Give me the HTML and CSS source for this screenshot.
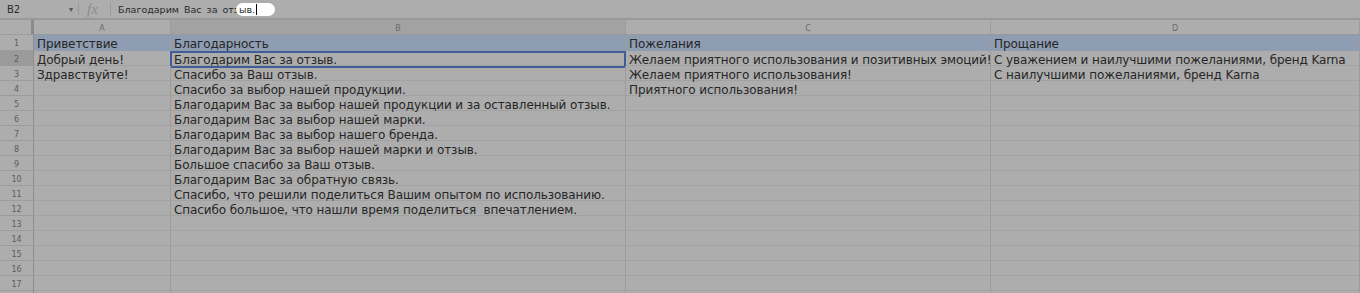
FILE: index.html
```html
<!DOCTYPE html>
<html lang="ru">
<head>
    <meta charset="UTF-8">
    <title>Таблица ответов</title>
    <link rel="stylesheet" href="styles.css">
</head>
<body>
    <div class="formula-bar">
        <div class="name-box">B2</div>
        <div class="name-arrow">&#9662;</div>
        <div class="bar-sep"></div>
        <div class="fx">fx</div>
        <div class="bar-sep"></div>
        <div class="formula-text">Благодарим Вас за отз<span class="spot">ыв.<span class="caret"></span></span></div>
    </div>

    <div class="sheet">
        <div class="row head">
            <div class="cell num corner"></div>
            <div class="cell letter">A</div>
            <div class="cell letter active">B</div>
            <div class="cell letter">C</div>
            <div class="cell letter">D</div>
        </div>
        <div class="row first">
            <div class="cell num">1</div>
            <div class="cell title">Приветствие</div>
            <div class="cell title">Благодарность</div>
            <div class="cell title">Пожелания</div>
            <div class="cell title">Прощание</div>
        </div>
        <div class="row">
            <div class="cell num active">2</div>
            <div class="cell">Добрый день!</div>
            <div class="cell selected">Благодарим Вас за отзыв.</div>
            <div class="cell">Желаем приятного использования и позитивных эмоций!</div>
            <div class="cell">С уважением и наилучшими пожеланиями, бренд Karna</div>
        </div>
        <div class="row">
            <div class="cell num">3</div>
            <div class="cell">Здравствуйте!</div>
            <div class="cell">Спасибо за Ваш отзыв.</div>
            <div class="cell">Желаем приятного использования!</div>
            <div class="cell">С наилучшими пожеланиями, бренд Karna</div>
        </div>
        <div class="row">
            <div class="cell num">4</div>
            <div class="cell"></div>
            <div class="cell">Спасибо за выбор нашей продукции.</div>
            <div class="cell">Приятного использования!</div>
            <div class="cell"></div>
        </div>
        <div class="row">
            <div class="cell num">5</div>
            <div class="cell"></div>
            <div class="cell">Благодарим Вас за выбор нашей продукции и за оставленный отзыв.</div>
            <div class="cell"></div>
            <div class="cell"></div>
        </div>
        <div class="row">
            <div class="cell num">6</div>
            <div class="cell"></div>
            <div class="cell">Благодарим Вас за выбор нашей марки.</div>
            <div class="cell"></div>
            <div class="cell"></div>
        </div>
        <div class="row">
            <div class="cell num">7</div>
            <div class="cell"></div>
            <div class="cell">Благодарим Вас за выбор нашего бренда.</div>
            <div class="cell"></div>
            <div class="cell"></div>
        </div>
        <div class="row">
            <div class="cell num">8</div>
            <div class="cell"></div>
            <div class="cell">Благодарим Вас за выбор нашей марки и отзыв.</div>
            <div class="cell"></div>
            <div class="cell"></div>
        </div>
        <div class="row">
            <div class="cell num">9</div>
            <div class="cell"></div>
            <div class="cell">Большое спасибо за Ваш отзыв.</div>
            <div class="cell"></div>
            <div class="cell"></div>
        </div>
        <div class="row">
            <div class="cell num">10</div>
            <div class="cell"></div>
            <div class="cell">Благодарим Вас за обратную связь.</div>
            <div class="cell"></div>
            <div class="cell"></div>
        </div>
        <div class="row">
            <div class="cell num">11</div>
            <div class="cell"></div>
            <div class="cell">Спасибо, что решили поделиться Вашим опытом по использованию.</div>
            <div class="cell"></div>
            <div class="cell"></div>
        </div>
        <div class="row">
            <div class="cell num">12</div>
            <div class="cell"></div>
            <div class="cell">Спасибо большое, что нашли время поделиться &nbsp;впечатлением.</div>
            <div class="cell"></div>
            <div class="cell"></div>
        </div>
        <div class="row">
            <div class="cell num">13</div>
            <div class="cell"></div><div class="cell"></div><div class="cell"></div><div class="cell"></div>
        </div>
        <div class="row">
            <div class="cell num">14</div>
            <div class="cell"></div><div class="cell"></div><div class="cell"></div><div class="cell"></div>
        </div>
        <div class="row">
            <div class="cell num">15</div>
            <div class="cell"></div><div class="cell"></div><div class="cell"></div><div class="cell"></div>
        </div>
        <div class="row">
            <div class="cell num">16</div>
            <div class="cell"></div><div class="cell"></div><div class="cell"></div><div class="cell"></div>
        </div>
        <div class="row">
            <div class="cell num">17</div>
            <div class="cell"></div><div class="cell"></div><div class="cell"></div><div class="cell"></div>
        </div>
        <div class="row">
            <div class="cell num"></div>
            <div class="cell"></div><div class="cell"></div><div class="cell"></div><div class="cell"></div>
        </div>
    </div>
</body>
</html>
```

FILE: styles.css
```css
body {
    margin: 0;
    padding: 0;
    background: #adadad;
    font-family: "DejaVu Sans", Verdana, sans-serif;
    color: #262626;
    overflow: hidden;
}

.formula-bar {
    display: flex;
    align-items: center;
    height: 18px;
    border-bottom: 1px solid #999;
    background: #adadad;
}

.name-box {
    width: 62px;
    padding-left: 7px;
    font-size: 10px;
    color: #2a2a2a;
}

.name-arrow {
    width: 9px;
    font-size: 8px;
    color: #555;
}

.bar-sep {
    width: 1px;
    height: 12px;
    background: #999;
}

.fx {
    width: 23px;
    padding-left: 8px;
    font-family: "Liberation Serif", serif;
    font-style: italic;
    font-size: 15px;
    line-height: 15px;
    color: #8c8c8c;
}

.formula-text {
    padding-left: 7px;
    font-size: 9.5px;
    word-spacing: 2px;
    color: #2a2a2a;
}

.spot {
    display: inline-flex;
    align-items: center;
    height: 13px;
    margin-left: -3px;
    padding: 0 18px 0 3px;
    background: #fff;
    border-radius: 7px;
    color: #333;
}

.caret {
    display: inline-block;
    width: 1px;
    height: 11px;
    margin-left: 1px;
    background: #000;
}

.row {
    display: grid;
    grid-template-columns: 34px 137px 455px 365px 1fr;
    grid-template-rows: 15px;
}

.row.head,
.row.first {
    grid-template-rows: 16px;
}

.cell {
    box-sizing: border-box;
    border-right: 1px solid #9c9c9c;
    border-bottom: 1px solid #a2a2a2;
    padding: 3px 3px 0;
    font-size: 12px;
    line-height: 13px;
    letter-spacing: -0.1px;
    white-space: nowrap;
    position: relative;
}

.num {
    padding: 2px 0 0;
    text-align: center;
    font-size: 8px;
    line-height: 14px;
    letter-spacing: 0;
    color: #5c5c5c;
    border-right: 1px solid #8e8e8e;
    border-bottom: 1px solid #9c9c9c;
}

.num.active {
    background: #9b9b9b;
}

.corner {
    border-right: 3px solid #8a8a8a;
    border-top: 1px solid #999;
}

.letter {
    padding-top: 2px;
    text-align: center;
    font-size: 8px;
    line-height: 13px;
    letter-spacing: 0;
    color: #6a6a6a;
    border-top: 1px solid #999;
    border-bottom: 1px solid #999;
}

.letter.active {
    background: #a2a2a2;
}

.title {
    background: #8e9db1;
    border-bottom-color: #8e9db1;
    padding-top: 3px;
}

.selected::after {
    content: "";
    position: absolute;
    left: -1px;
    top: 0;
    right: -1px;
    bottom: -3px;
    border: 2px solid #3d5e96;
}
```
